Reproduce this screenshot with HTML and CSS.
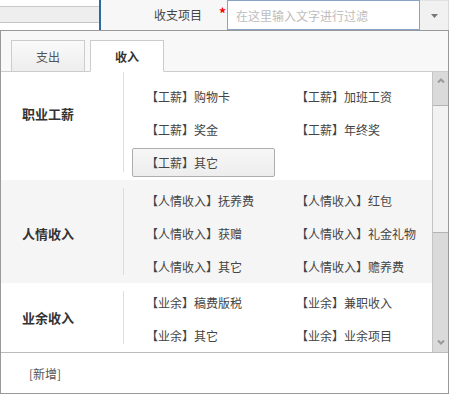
FILE: index.html
```html
<!doctype html>
<html>
<head>
<meta charset="utf-8">
<title>收支项目</title>
<link rel="stylesheet" href="styles.css">
</head>

<body>
<div class="head">
	<div class="head_left"><div class="bar"></div></div>
	<div class="head_right">
		<span class="label">收支项目</span>
		<span class="must">*</span>
		<input class="filter" type="text" placeholder="在这里输入文字进行过滤">
		<span class="drop"><svg width="7" height="4" viewBox="0 0 7 4"><polygon points="0,0 7,0 3.5,4" fill="#777"/></svg></span>
	</div>
</div>
<div class="panel">
	<ul class="tabs">
		<li>支出</li>
		<li class="active">收入</li>
	</ul>
	<div class="body">
		<div class="groups">
			<div class="group first">
				<div class="gname">职业工薪</div>
				<div class="line"></div>
				<ul class="items">
					<li>【工薪】购物卡</li>
					<li>【工薪】加班工资</li>
					<li>【工薪】奖金</li>
					<li>【工薪】年终奖</li>
					<li class="hover">【工薪】其它</li>
				</ul>
			</div>
			<div class="group grey">
				<div class="gname">人情收入</div>
				<div class="line"></div>
				<ul class="items">
					<li>【人情收入】抚养费</li>
					<li>【人情收入】红包</li>
					<li>【人情收入】获赠</li>
					<li>【人情收入】礼金礼物</li>
					<li>【人情收入】其它</li>
					<li>【人情收入】赡养费</li>
				</ul>
			</div>
			<div class="group last">
				<div class="gname">业余收入</div>
				<div class="line"></div>
				<ul class="items">
					<li>【业余】稿费版税</li>
					<li>【业余】兼职收入</li>
					<li>【业余】其它</li>
					<li>【业余】业余项目</li>
				</ul>
			</div>
		</div>
		<div class="scroll">
			<div class="sb_up"><svg width="8" height="5" viewBox="0 0 8 5"><polyline points="1,4.5 4,1.5 7,4.5" fill="none" stroke="#9a9a9a" stroke-width="2"/></svg></div>
			<div class="sb_track"></div>
			<div class="sb_down"><svg width="8" height="5" viewBox="0 0 8 5"><polyline points="1,0.5 4,3.5 7,0.5" fill="none" stroke="#9a9a9a" stroke-width="2"/></svg></div>
		</div>
	</div>
	<div class="foot"><a class="add">[新增]</a></div>
</div>
</body>
</html>
```

FILE: styles.css
```css
*{ padding:0; margin:0; box-sizing:border-box;}
ul{ list-style:none;}
body{ background-color:#fff; font-family:"Noto Sans CJK SC", "Liberation Sans", sans-serif; font-size:12px; color:#444; width:449px;}

/* 顶部表单行 */
.head{ display:flex; height:30px;}
.head_left{ width:99px; padding-top:6px;}
.head_left .bar{ height:17px; background-color:#eee; border-top:1px solid #c8c8c8; border-bottom:1px solid #c4c4c4;}
.head_right{ flex:1; display:flex; align-items:center; background-color:#f7f7f7; border-left:2px solid #2d6aa2; padding-left:53px;}
.label{ width:48px; line-height:30px; color:#444; white-space:nowrap;}
.must{ width:25px; padding-right:1px; text-align:right; color:#f00; font-weight:bold; font-size:14px; line-height:30px; position:relative; top:-2px;}
.filter{ width:193px; height:30px; border:1px solid #87a4c4; padding-left:8px; font-family:inherit; font-size:12px; color:#444; outline:none;}
.filter::placeholder{ color:#bdbdbd;}
.drop{ width:29px; height:30px; display:flex; align-items:center; justify-content:center; background-color:#f1f1f1; border-top:1px solid #e2e2e2; border-right:1px solid #d8d8d8;}

/* 下拉面板 */
.panel{ border:1px solid #999; background-color:#fff;}
.tabs{ display:flex; padding:9px 0 0 10px; background-color:#f8f8f8; border-bottom:1px solid #ccc;}
.tabs li{ width:74px; height:32px; margin-right:5px; margin-bottom:-1px; border:1px solid #ccc; line-height:31px; text-align:center; color:#555; background:linear-gradient(#fafafa,#ededed);}
.tabs li.active{ background:#fff; border-bottom-color:#fff; font-weight:bold; color:#333;}

.body{ display:flex;}
.groups{ flex:1;}
.group{ display:flex;}
.group.grey{ background-color:#f5f5f5;}
.gname{ width:122px; display:flex; align-items:center; padding:4px 0 0 21px; font-size:13px; font-weight:bold; color:#333;}
.first .gname{ padding-bottom:30px;}
.last .gname{ padding-top:0;}
.line{ width:1px; margin:8px 0; background-color:#ddd;}
.first .line{ margin-top:0;}
.items{ display:grid; grid-template-columns:143px 143px; column-gap:7px; row-gap:4px; padding:5px 0 2px 8px;}
.first .items{ padding-top:10px; padding-bottom:3px;}
.grey .items{ padding-top:6px;}
.items li{ height:29px; line-height:27px; border:1px solid transparent; padding-left:13px; white-space:nowrap; color:#444;}
.items li.hover{ border-color:#adadad; border-radius:2px; background:linear-gradient(#f7f7f7,#ededed);}

/* 滚动条 */
.scroll{ width:16px; display:flex; flex-direction:column; border-left:1px solid #c4c4c4;}
.sb_up{ height:33px; background-color:#dadada; display:flex; justify-content:center; padding-top:6px;}
.sb_track{ height:127px; background-color:#f2f2f2; border-top:1px solid #b4b4b4;}
.sb_down{ flex:1; background-color:#dadada; border-top:1px solid #b4b4b4; display:flex; justify-content:center; align-items:flex-end; padding-bottom:7px;}

.foot{ height:41px; border-top:1px solid #bbb; padding:12px 0 0 28px;}
.add{ color:#555; line-height:16px; cursor:pointer;}
```
